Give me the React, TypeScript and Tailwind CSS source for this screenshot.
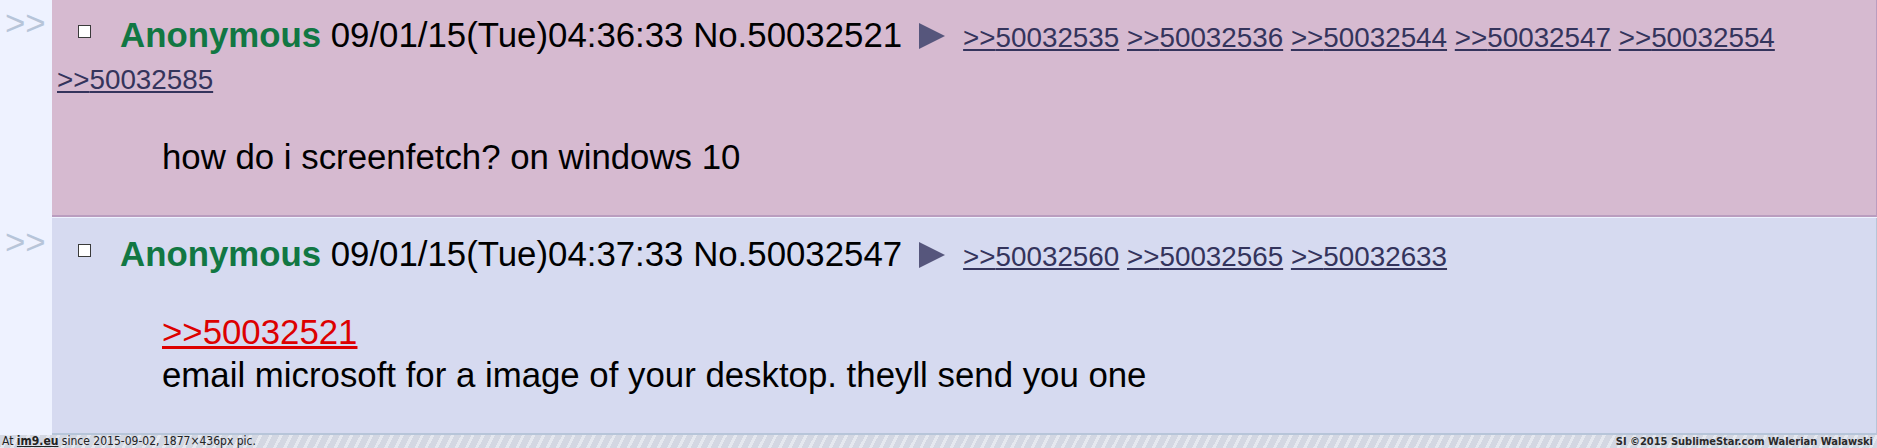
import React from "react";

function Checkbox() {
  return (
    <span className="inline-block w-[13px] h-[13px] ml-[21px] mr-[29px] bg-white border border-[#3a3a3a] align-[9px]" />
  );
}

function Tri() {
  return (
    <svg
      className="inline-block ml-[17px] mr-[18px] align-[-2px]"
      width="26"
      height="26"
      viewBox="0 0 26 26"
    >
      <polygon points="0,0 26,13 0,26" fill="#56567c" />
    </svg>
  );
}

function Backlinks({ ids }: { ids: string[] }) {
  return (
    <span className="text-[27.8px] leading-[30px]">
      {ids.map((id, i) => (
        <React.Fragment key={id}>
          {i > 0 ? " " : null}
          <a className="text-[#34345c] underline">&gt;&gt;{id}</a>
        </React.Fragment>
      ))}
    </span>
  );
}

function Arrows({ pt }: { pt: string }) {
  return (
    <div className={`w-[52px] shrink-0 pl-[5px] text-[#b7c5d9] text-[34.8px] leading-[42px] ${pt}`}>
      &gt;&gt;
    </div>
  );
}

export default function App() {
  return (
    <div className="w-[1877px] h-[448px] overflow-hidden bg-[#eef2ff] flex flex-col font-['Liberation_Sans',Arial,sans-serif] text-black">
      {/* Post 1 */}
      <div className="flex h-[217px] shrink-0">
        <Arrows pt="pt-[2px]" />
        <div className="flex-1 bg-[#d6bad0] border-b-2 border-r border-[#ba9dbf] pt-[14px] pl-[5px] pr-[2px]">
          <div className="text-[34.8px] leading-[42px]">
            <Checkbox />
            <span className="font-bold text-[#117743]">Anonymous</span> 09/01/15(Tue)04:36:33 No.50032521
            <Tri />
            <Backlinks ids={["50032535", "50032536", "50032544", "50032547", "50032554", "50032585"]} />
          </div>
          <div className="ml-[105px] mt-[37px] text-[34.8px] leading-[43px]">
            how do i screenfetch? on windows 10
          </div>
        </div>
      </div>

      <div className="h-px shrink-0" />

      {/* Post 2 */}
      <div className="flex h-[217px] shrink-0">
        <Arrows pt="pt-[3px]" />
        <div className="flex-1 bg-[#d6daf0] border-b-2 border-r border-[#b7c5d9] pt-[15px] pl-[5px] pr-[2px]">
          <div className="text-[34.8px] leading-[42px]">
            <Checkbox />
            <span className="font-bold text-[#117743]">Anonymous</span> 09/01/15(Tue)04:37:33 No.50032547
            <Tri />
            <Backlinks ids={["50032560", "50032565", "50032633"]} />
          </div>
          <div className="ml-[105px] mt-[35px] text-[34.8px] leading-[43px]">
            <a className="text-[#dd0000] underline">&gt;&gt;50032521</a>
            <br />
            email microsoft for a image of your desktop. theyll send you one
          </div>
        </div>
      </div>

      {/* Watermark bar */}
      <div className="h-[13px] shrink-0 flex items-center justify-between px-[2px] bg-[repeating-linear-gradient(117deg,#d3d7e2_0px,#d3d7e2_6px,#e5e8ef_6px,#e5e8ef_9px)] font-['DejaVu_Sans_Condensed','DejaVu_Sans',sans-serif] [font-stretch:condensed] leading-[13px] text-[#222]">
        <span className="font-medium text-[12px]">
          At <span className="font-bold underline">im9.eu</span> since 2015-09-02, 1877×436px pic.
        </span>
        <span className="font-semibold text-[11px] text-[#2a2a2a] pr-[2px]">SI ©2015 SublimeStar.com Walerian Walawski</span>
      </div>
    </div>
  );
}
